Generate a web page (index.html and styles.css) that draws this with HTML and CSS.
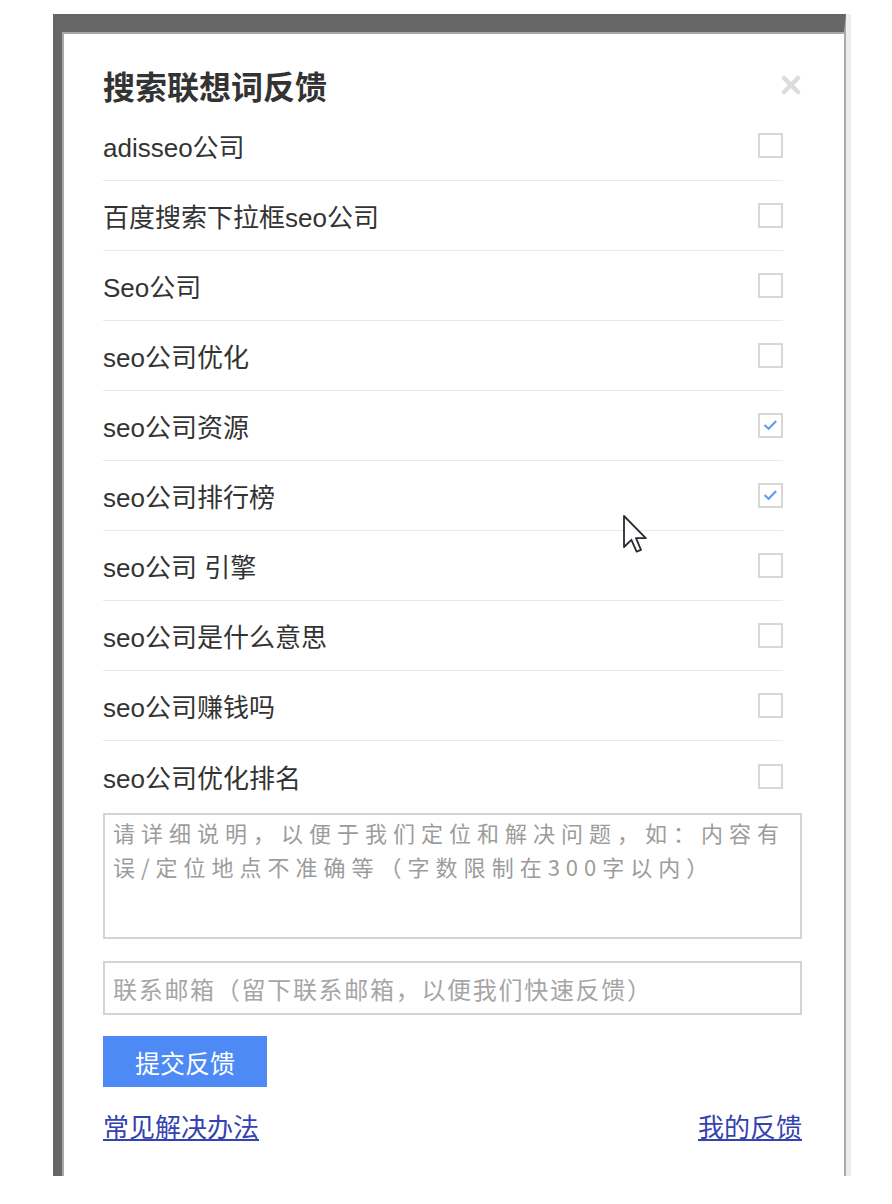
FILE: index.html
```html
<!DOCTYPE html>
<html lang="zh-CN">
<head>
    <meta charset="UTF-8">
    <title>搜索联想词反馈</title>
    <link rel="stylesheet" href="styles.css">
</head>
<body>
    <div class="window">
        <div class="dialog">
            <div class="header">
                <h2>搜索联想词反馈</h2>
                <span class="close">
                    <svg width="20" height="20" viewBox="0 0 20 20">
                        <path d="M3 3 L17 17 M17 3 L3 17" stroke="#dcdcdc" stroke-width="4.5" stroke-linecap="round"/>
                    </svg>
                </span>
            </div>

            <ul class="words">
                <li><span>adisseo公司</span><span class="box"></span></li>
                <li><span>百度搜索下拉框seo公司</span><span class="box"></span></li>
                <li><span>Seo公司</span><span class="box"></span></li>
                <li><span>seo公司优化</span><span class="box"></span></li>
                <li><span>seo公司资源</span><span class="box checked"><svg width="21" height="21" viewBox="0 0 21 21"><path d="M4.5 10 L8.6 13.8 L16.2 6" fill="none" stroke="#6497ef" stroke-width="2"/></svg></span></li>
                <li><span>seo公司排行榜</span><span class="box checked"><svg width="21" height="21" viewBox="0 0 21 21"><path d="M4.5 10 L8.6 13.8 L16.2 6" fill="none" stroke="#6497ef" stroke-width="2"/></svg></span></li>
                <li><span>seo公司 引擎</span><span class="box"></span></li>
                <li><span>seo公司是什么意思</span><span class="box"></span></li>
                <li><span>seo公司赚钱吗</span><span class="box"></span></li>
                <li><span>seo公司优化排名</span><span class="box"></span></li>
            </ul>

            <textarea class="detail" placeholder="请详细说明，以便于我们定位和解决问题，如：内容有误/定位地点不准确等（字数限制在300字以内）"></textarea>
            <input class="email" type="text" placeholder="联系邮箱（留下联系邮箱，以便我们快速反馈）">
            <button class="submit">提交反馈</button>

            <div class="links">
                <a href="#">常见解决办法</a>
                <a href="#">我的反馈</a>
            </div>
        </div>
    </div>

    <svg class="cursor" width="24" height="38" viewBox="0 0 12 19">
        <path d="M0.5 0.5 L0.5 16 L4.2 12.4 L6.8 18.3 L9 17.4 L6.5 11.6 L11.4 11.6 Z" fill="#fff" stroke="#2a2a33" stroke-width="0.9" stroke-linejoin="round"/>
    </svg>
</body>
</html>
```

FILE: styles.css
```css
* {
    box-sizing: border-box;
}

body {
    margin: 0;
    background: #fff;
    font-family: "Liberation Sans", "Noto Sans CJK SC", sans-serif;
    color: #333;
    position: relative;
    min-height: 1204px;
}

.window {
    margin: 14px 0 0 53px;
    width: 793px;
    border-top: 18px solid #666;
    border-left: 9px solid #666;
    border-right: 2px solid #aaa;
    box-shadow: 5px 0 0 #ededed;
}

.dialog {
    border-top: 2px solid #a8a8a8;
    border-left: 2px solid #a8a8a8;
    padding: 31px 42px 35px 39px;
}

.header {
    display: flex;
    align-items: center;
    justify-content: space-between;
    margin-bottom: 6px;
}

h2 {
    margin: 0;
    font-family: "Noto Sans CJK SC", sans-serif;
    font-size: 32px;
    line-height: 40px;
    font-weight: bold;
    color: #333;
}

.close {
    display: flex;
    margin-right: 1px;
}

.words {
    list-style: none;
    margin: 0 19px 0 0;
    padding: 0;
}

.words li {
    display: flex;
    align-items: center;
    justify-content: space-between;
    height: 70px;
    font-size: 26px;
    border-bottom: 1px solid #e8e8e8;
}

.words li:last-child {
    border-bottom: none;
}

.box {
    width: 25px;
    height: 25px;
    border: 2px solid #d8d8d8;
    display: flex;
    align-items: center;
    justify-content: center;
}

.detail,
.email {
    display: block;
    width: 100%;
    border: 2px solid #d4d4d4;
    padding: 0 8px;
    font-family: "Noto Sans CJK SC", sans-serif;
    color: #333;
    outline: none;
}

.detail {
    margin-top: 2px;
    height: 126px;
    resize: none;
    font-size: 22px;
    letter-spacing: 6px;
    line-height: 34px;
}

.detail::placeholder {
    color: #9c9c9c;
}

.email {
    margin-top: 22px;
    height: 54px;
    font-size: 24px;
    letter-spacing: 1.7px;
}

.email::placeholder {
    color: #a6a6a6;
}

.submit {
    display: block;
    margin-top: 21px;
    width: 164px;
    height: 51px;
    border: none;
    background: #4d8af6;
    color: #fff;
    font-family: "Noto Sans CJK SC", sans-serif;
    font-size: 25px;
    padding: 0;
}

.links {
    display: flex;
    justify-content: space-between;
    margin-top: 24px;
    font-family: "Noto Sans CJK SC", sans-serif;
    font-size: 26px;
    line-height: 30px;
}

.links a {
    color: #3442b2;
    text-decoration: underline;
}

.cursor {
    position: absolute;
    left: 623px;
    top: 515px;
}
```
